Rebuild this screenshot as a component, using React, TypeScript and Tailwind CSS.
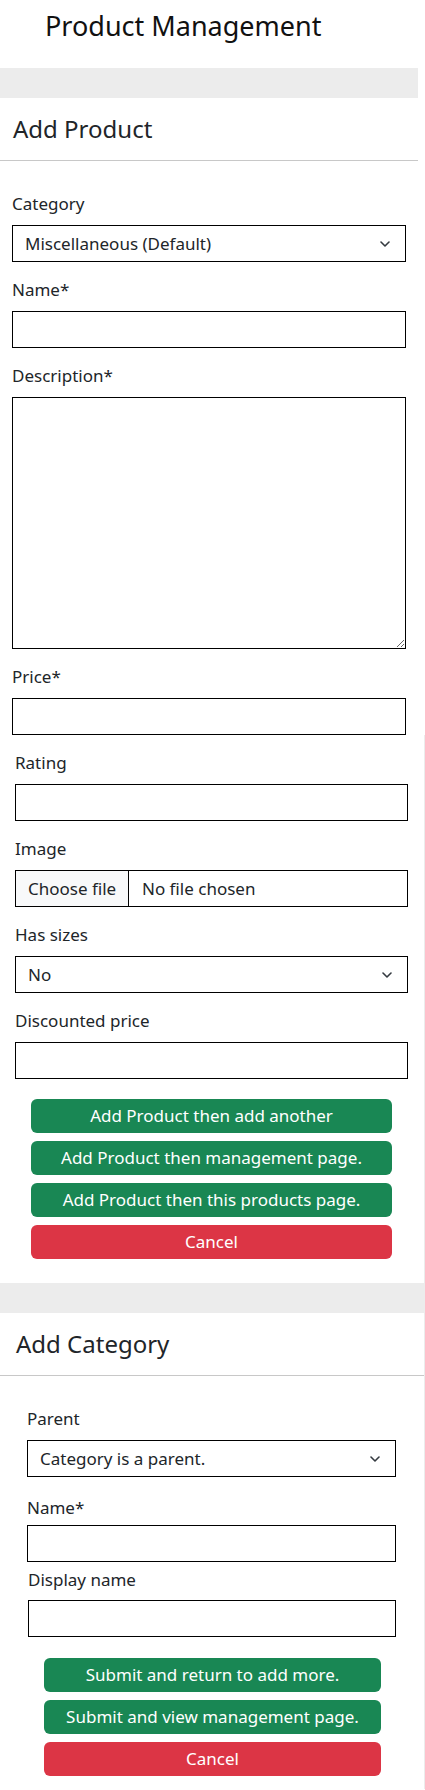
import React from "react";

const fieldBox = "block w-full h-[37px] border border-black bg-white px-3 text-[17px] text-[#212529] outline-none";

function Chevron() {
    return (
        <svg width="10" height="6" viewBox="0 0 10 6" className="absolute right-[16px] top-1/2 -translate-y-1/2 pointer-events-none">
            <path d="M1 1l4 4 4-4" fill="none" stroke="#343a40" strokeWidth="1.6" strokeLinecap="round" strokeLinejoin="round" />
        </svg>
    );
}

function Label({ text, className = "mb-[9px]" }: { text: string; className?: string }) {
    return <label className={"block text-[17px] leading-6 text-[#212529] " + className}>{text}</label>;
}

function SelectBox({ value }: { value: string }) {
    return (
        <div className="relative">
            <select className={fieldBox + " appearance-none"} defaultValue={value}>
                <option>{value}</option>
            </select>
            <Chevron />
        </div>
    );
}

function GreenButton({ text }: { text: string }) {
    return (
        <button className="h-[34px] w-full rounded-md bg-[#198754] text-[17px] text-white">{text}</button>
    );
}

function CancelButton() {
    return (
        <button className="h-[34px] w-full rounded-md bg-[#dc3545] text-[17px] text-white">Cancel</button>
    );
}

function Band() {
    return <div className="h-[30px] bg-[#ececec]" />;
}

function CardHeader({ title, pl }: { title: string; pl: string }) {
    return (
        <div className={"flex h-[63px] items-center border-b border-[#c8c8c8] text-[24px] text-[#212529] " + pl}>
            {title}
        </div>
    );
}

export default function App() {
    return (
        <div className="w-[425px] bg-white" style={{ fontFamily: "'Noto Sans', sans-serif" }}>
            <h1 className="h-[68px] pl-[45px] pt-[6px] text-[27px] leading-[40px] text-[#111]">Product Management</h1>

            <div className="w-[418px]">
                <Band />
                <CardHeader title="Add Product" pl="pl-[13px]" />

                <div className="flex flex-col gap-4 px-3 pt-[31px]">
                    <div>
                        <Label text="Category" />
                        <SelectBox value="Miscellaneous (Default)" />
                    </div>
                    <div>
                        <Label text="Name*" />
                        <input className={fieldBox} type="text" />
                    </div>
                    <div>
                        <Label text="Description*" />
                        <textarea className="block h-[252px] w-full border border-black bg-white p-2 text-[17px] outline-none" />
                    </div>
                    <div>
                        <Label text="Price*" />
                        <input className={fieldBox} type="text" />
                    </div>
                </div>
            </div>

            <div className="w-[425px] border-r border-[#ececec]">
                <div className="flex flex-col gap-4 pl-[15px] pr-[16px] pt-4">
                    <div>
                        <Label text="Rating" />
                        <input className={fieldBox} type="text" />
                    </div>
                    <div>
                        <Label text="Image" />
                        <div className="flex h-[37px] border border-black text-[17px] text-[#212529]">
                            <span className="flex w-[113px] items-center border-r border-black bg-[#f8f9fa] pl-[12px]">Choose file</span>
                            <span className="flex items-center pl-[13px]">No file chosen</span>
                        </div>
                    </div>
                    <div>
                        <Label text="Has sizes" />
                        <SelectBox value="No" />
                    </div>
                    <div>
                        <Label text="Discounted price" />
                        <input className={fieldBox} type="text" />
                    </div>
                    <div className="mx-4 mt-[4px] mb-[24px] flex flex-col gap-2">
                        <GreenButton text="Add Product then add another" />
                        <GreenButton text="Add Product then management page." />
                        <GreenButton text="Add Product then this products page." />
                        <CancelButton />
                    </div>
                </div>

                <Band />
                <CardHeader title="Add Category" pl="pl-[16px]" />

                <div className="pl-[27px] pr-[28px] pt-[31px] pb-[13px]">
                    <Label text="Parent" />
                    <SelectBox value="Category is a parent." />
                    <Label text="Name*" className="mt-[19px] mb-[5px]" />
                    <input className={fieldBox} type="text" />
                    <Label text="Display name" className="mt-[6px] mb-[8px] pl-px" />
                    <div className="pl-px">
                        <input className={fieldBox} type="text" />
                    </div>
                    <div className="mt-[21px] ml-[17px] flex w-[337px] flex-col gap-2">
                        <GreenButton text="Submit and return to add more." />
                        <GreenButton text="Submit and view management page." />
                        <CancelButton />
                    </div>
                </div>
            </div>
        </div>
    );
}
